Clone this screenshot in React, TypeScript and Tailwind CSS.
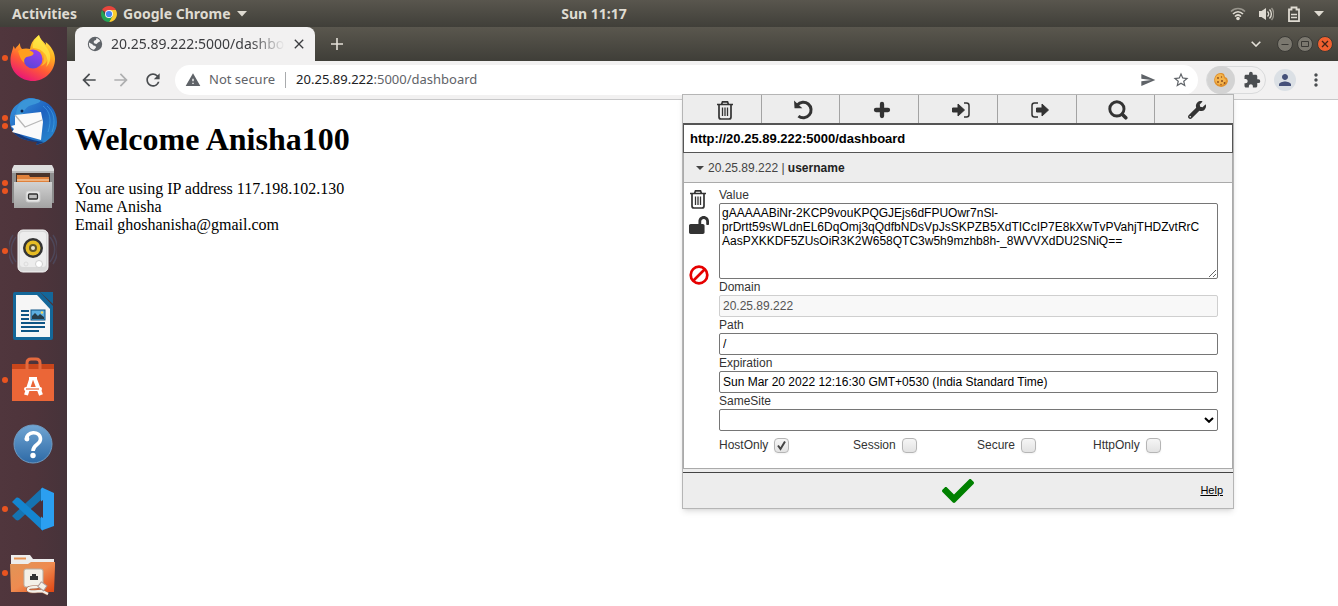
import type { ReactNode } from 'react';
import {
  MdArrowBack,
  MdArrowForward,
  MdClose,
  MdExtension,
  MdMoreVert,
  MdPerson,
  MdRefresh,
  MdSend,
  MdStarBorder,
  MdWarning,
} from 'react-icons/md';
import { FaCheck, FaLockOpen, FaWrench } from 'react-icons/fa';

const cookieValue = [
  'gAAAAABiNr-2KCP9vouKPQGJEjs6dFPUOwr7nSl-',
  'prDrtt59sWLdnEL6DqOmj3qQdfbNDsVpJsSKPZB5XdTICcIP7E8kXwTvPVahjTHDZvtRrC',
  'AasPXKKDF5ZUsOiR3K2W658QTC3w5h9mzhb8h-_8WVVXdDU2SNiQ==',
].join('\n');

/* ---------- Dock icons ---------- */

const Firefox = () => (
  <svg viewBox="0 0 48 48" className="size-12">
    <defs>
      <linearGradient id="fx" x1="0.8" y1="0" x2="0.3" y2="1">
        <stop offset="0" stopColor="#fff04a" />
        <stop offset="0.35" stopColor="#ffae20" />
        <stop offset="0.65" stopColor="#ff5a36" />
        <stop offset="1" stopColor="#e8127c" />
      </linearGradient>
      <linearGradient id="fxp" x1="0.7" y1="0" x2="0.3" y2="1">
        <stop offset="0" stopColor="#9a3ff0" />
        <stop offset="1" stopColor="#5b45d8" />
      </linearGradient>
    </defs>
    <path fill="url(#fx)" d="M30 1c1 4 5 7 7 10 0-1 0-2-.5-3C42 12 46 18 46 25c0 12-10 22-22 22S1.500 38 1.500 26c0-6 2-9 3-14 0 0 1 1 1.500 3C8 12 10 11 11 9c0 2 0 4 2 6 2-.7 6-.7 8 0 1-7 4-10 9-14z" />
    <circle cx="24" cy="25" r="9.500" fill="url(#fxp)" />
    <path fill="#ff9f1e" d="M9 17c5-3 10-2 13 0 2 1 3 2 2.500 3-1 2-4 2-7 3-2 1-3 3-2 6-4-3-5-8-6.500-12z" />
    <path fill="#ffb62b" d="M24 14c4-1 9 1 10 6 2 4 1 9-2 12 6-2 9-9 6-15-3-5-9-6-14-3z" />
    <path fill="#fff04a" d="M30 1c-5 4-7 9-6 13 5 0 9 2 12 6 3 4 3 9 1 13 5-4 6-12 1-19C35 10 31 6 30 1z" opacity=".65" />
  </svg>
);

const Thunderbird = () => (
  <svg viewBox="0 0 48 48" className="size-12">
    <defs>
      <linearGradient id="tb" x1="0" y1="0" x2="1" y2="1">
        <stop offset="0" stopColor="#3b9be0" />
        <stop offset="0.5" stopColor="#1e62c0" />
        <stop offset="1" stopColor="#2a8fd0" />
      </linearGradient>
    </defs>
    <path fill="url(#tb)" d="M20 0c3-.5 6 .5 8 1.500C40 3 48 12 48 24c0 10-7 18-14 21l-7 2 2-4C18 44 6 40 2 30-1 20 2 10 9 6c3-3 6-5 11-6z" />
    <path fill="#153a7c" d="M2 30c6 6 19 13 33 14l-8 3 1-3C15 43 5 38 2 30z" />
    <path fill="#3a95d8" d="M10 7c4-5 9-7 17-6 8 1 4 4-4 6-5 1-8 5-9 9l-7 1c0-4 1-7 3-10z" />
    <path fill="#fafafa" d="M6 17l26-3 2 10-2 18L3 34l2-3-3-3 4-1z" />
    <path fill="none" stroke="#b7b7b7" strokeWidth="1.300" d="M6 17l10 12 17-7" />
    <circle cx="13" cy="13" r="1.500" fill="#0c2350" />
    <path fill="none" stroke="#4db0ee" strokeWidth="1" opacity=".5" d="M34 8c7 5 9 14 5 26M38 8c7 6 9 15 5 26" />
  </svg>
);

const Files = () => (
  <svg viewBox="0 0 48 48" className="size-12">
    <defs>
      <linearGradient id="fl" x1="0" y1="0" x2="0" y2="1">
        <stop offset="0" stopColor="#d2d2d2" />
        <stop offset="1" stopColor="#a3a3a3" />
      </linearGradient>
    </defs>
    <path fill="#8e8e8e" d="M3 6h42v34H3z" />
    <path fill="#b9b9b9" d="M3 6h42v4H3z" />
    <path fill="#dedede" d="M5 2h38l2 4v2H3V6z" />
    <path fill="#4a332a" d="M7 10h34v9H7z" />
    <path fill="#e0813b" d="M8 12h12l1 2h19v5H8z" />
    <path stroke="#fce5c8" d="M8 17h32" />
    <path fill="url(#fl)" d="M5 19h38v26H5z" />
    <rect x="17" y="28" width="14" height="11" rx="2" fill="#e7e7e7" stroke="#c9c9c9" />
    <rect x="19.500" y="31" width="9" height="5" rx="1" fill="#bcbcbc" stroke="#2f2f2f" strokeWidth="1.300" />
  </svg>
);

const Speaker = () => (
  <svg viewBox="0 0 48 48" className="size-12">
    <g fill="none" stroke="#546488" strokeWidth="1.500" opacity=".4">
      <path d="M7 10c-6 8-6 17 0 25M4 8c-6 9-6 20 0 29M41 10c6 8 6 17 0 25M44 8c6 9 6 20 0 29" />
    </g>
    <rect x="9" y="3" width="30" height="42" rx="5" fill="#d9d9d9" stroke="#f5f5f5" />
    <rect x="11" y="5" width="26" height="35" rx="3" fill="#ededed" />
    <circle cx="24" cy="21" r="10" fill="#343434" />
    <circle cx="24" cy="21" r="7.500" fill="#e6bc25" />
    <circle cx="24" cy="21" r="4" fill="#62572a" />
    <circle cx="24" cy="21" r="2" fill="#e9e4cf" />
    <circle cx="30" cy="37" r="3.500" fill="#fff" stroke="#cfcfcf" />
    <circle cx="17" cy="37" r="2" fill="none" stroke="#dcdcdc" />
  </svg>
);

const Writer = () => (
  <svg viewBox="0 0 48 48" className="size-12">
    <path fill="#146799" d="M6 0h25l13 14v32a2 2 0 0 1-2 2H6a2 2 0 0 1-2-2V2a2 2 0 0 1 2-2z" />
    <path fill="#f6f6f6" d="M7 3h21l13 14v28H7z" />
    <path fill="#146799" d="M31 0h13v12z" />
    <path stroke="#0e5585" strokeWidth="2" d="M12 19h8M12 23h8M12 27h8M12 31h24M12 35h24M12 39h18" />
    <rect x="22" y="18" width="14" height="10" fill="#5daee0" stroke="#0e5585" />
    <path fill="#273d49" d="M23 27v-3l3-3 3 3 2-2 4 3v2z" />
    <circle cx="33" cy="20.500" r="1.200" fill="#f5d75c" />
  </svg>
);

const Software = () => (
  <svg viewBox="0 0 48 48" className="size-12">
    <path fill="#c9461b" d="M3 8h42v6H3z" />
    <path fill="#eb6637" d="M3 13h42v32H3z" />
    <path fill="none" stroke="#e56a3e" strokeWidth="3" d="M18 14V7c0-3 2-4 4-4h5c2 0 4 1 4 4v7" />
    <g stroke="#fff" fill="none">
      <path strokeWidth="4" d="M22.500 22l-5.500 17M25.500 22l6.500 17" />
      <path strokeWidth="3" d="M20 22.500h8" />
      <path strokeWidth="4" strokeLinecap="round" d="M17 33h14" />
      <path stroke="#eb6637" strokeWidth="1.200" d="M17 33h13" />
    </g>
  </svg>
);

const HelpIcon = () => (
  <svg viewBox="0 0 48 48" className="size-12">
    <defs>
      <linearGradient id="hp" x1="0" y1="0" x2="0" y2="1">
        <stop offset="0" stopColor="#70a5d3" />
        <stop offset="1" stopColor="#2e6aa6" />
      </linearGradient>
    </defs>
    <circle cx="24" cy="24" r="19" fill="url(#hp)" stroke="#6f9cc4" />
    <path fill="none" stroke="#fff" strokeWidth="3.600" d="M17.500 20c-1-9 14-10 14-1 0 6-7.500 5-7.500 12" />
    <circle cx="18" cy="19" r="2.400" fill="#fff" />
    <circle cx="24" cy="35.500" r="2.700" fill="#fff" />
  </svg>
);

const Code = () => (
  <svg viewBox="0 0 48 48" className="size-12">
    <path fill="#1673b1" d="M3 31l4 4c1 .7 2 .6 3 0L34 13V2z" />
    <path fill="#1485cf" d="M3 17l4-4c1-.7 2-.6 3 0l24 22v11z" />
    <path fill="#2b9ff0" d="M34 3l11 5v33l-11 4c-1 0-2-.5-2-1V4c0-.5 1-1 2-1z" />
    <path fill="#49303a" d="M34 15v18L22 24z" />
  </svg>
);

const FolderNetwork = () => (
  <svg viewBox="0 0 48 48" className="size-12">
    <defs>
      <linearGradient id="fd" x1="0" y1="0" x2="1" y2="1">
        <stop offset="0" stopColor="#df9558" />
        <stop offset="0.5" stopColor="#ef8b50" />
        <stop offset="1" stopColor="#e04411" />
      </linearGradient>
    </defs>
    <path fill="#ededed" d="M2 6h19l3 4h21v10H2z" />
    <path stroke="#e69252" strokeWidth="2" d="M5 9.500h12" />
    <path fill="url(#fd)" d="M1 15h18l3-2h24v4l-1 26H2z" />
    <rect x="15" y="20" width="19" height="18" rx="2" fill="#f4f0e8" stroke="#b5afa6" />
    <path fill="#343434" d="M21 31v-4h2v-2h4v2h2v4z" />
    <path fill="none" stroke="#9f6248" strokeWidth="3.500" d="M34 35c-5 6-14 1-15 5s9 2 14 2l6 3" />
    <path fill="none" stroke="#f4f0e8" strokeWidth="2.300" d="M34 35c-5 6-14 1-15 5s9 2 14 2l6 3" />
    <rect x="30" y="34" width="7" height="6" fill="#f4f0e8" stroke="#a99" transform="rotate(35 33 37)" />
  </svg>
);

const dock: { name: string; dots: number; icon: ReactNode }[] = [
  { name: 'Firefox', dots: 1, icon: <Firefox /> },
  { name: 'Thunderbird', dots: 2, icon: <Thunderbird /> },
  { name: 'Files', dots: 2, icon: <Files /> },
  { name: 'Rhythmbox', dots: 1, icon: <Speaker /> },
  { name: 'LibreOffice Writer', dots: 0, icon: <Writer /> },
  { name: 'Software', dots: 1, icon: <Software /> },
  { name: 'Help', dots: 0, icon: <HelpIcon /> },
  { name: 'Code', dots: 1, icon: <Code /> },
  { name: 'Network', dots: 1, icon: <FolderNetwork /> },
];

/* ---------- Small icons ---------- */

const ChromeLogo = () => (
  <svg viewBox="0 0 16 16" className="size-4">
    <path fill="#e8453c" d="M8 8L1.100 4A8 8 0 0 1 14.900 4z" />
    <path fill="#f9cc2f" d="M8 8V4h6.900A8 8 0 0 1 8 16l3.500-6z" />
    <path fill="#23a455" d="M8 8l3.500 2L8 16A8 8 0 0 1 1.100 4l3.400 6z" />
    <circle cx="8" cy="8" r="4" fill="#f4f4f4" />
    <circle cx="8" cy="8" r="3.100" fill="#4285f4" />
  </svg>
);

const Caret = () => (
  <svg viewBox="0 0 10 6" className="h-1.5 w-2.5">
    <path fill="currentColor" d="M0 0h10L5 5.500z" />
  </svg>
);

const Globe = () => (
  <svg viewBox="0 0 16 16" className="size-4 shrink-0">
    <circle cx="8" cy="8" r="7.200" fill="#5f6368" />
    <path fill="#f2f1f1" d="M9.500 2c1.500.5 3 1.500 3.800 3.300L11 6.500 9.500 8l-2-.5L6.500 6l1-1.500 1.500-.5zM2 6.500L5 8l1.500 1.500 2 .5.500 1.500L7 13.700C4 13.500 1.500 11 2 6.500z" />
  </svg>
);

const Cookie = () => (
  <svg viewBox="0 0 16 16" className="size-4">
    <path fill="#e0912c" d="M9 1a7 7 0 1 0 6 8l-1-3-2-1-1-3z" />
    <path fill="#f4b44c" d="M8 2a5.500 5.500 0 1 0 5 6l-2-2-1-3z" />
    <g fill="#8a4b1c">
      <circle cx="5" cy="6" r=".9" />
      <circle cx="8.500" cy="5" r=".7" />
      <circle cx="5" cy="10" r=".9" />
      <circle cx="9" cy="9" r="1" />
      <circle cx="11.500" cy="11" r=".9" />
      <circle cx="8" cy="12.500" r=".7" />
    </g>
  </svg>
);

const Trash = () => (
  <svg viewBox="0 0 18 20" className="h-5 w-4.5" fill="none" stroke="currentColor">
    <path strokeWidth="1.700" d="M1 4.500h16M5.500 4.500l1-2.700h5l1 2.700M3 4.500v12.500q0 2 2 2h8q2 0 2-2V4.500" />
    <path strokeWidth="1.300" d="M6.500 7.500v8.500M9 7.500v8.500M11.500 7.500v8.500" />
  </svg>
);

const Undo = () => (
  <svg viewBox="1 1 18 18" className="size-5">
    <path fill="none" stroke="currentColor" strokeWidth="2.700" d="M4 5.500A7 7 0 1 1 5 15.500" />
    <path fill="currentColor" d="M1 1.500l.5 7h7z" />
  </svg>
);

const Plus = () => (
  <svg viewBox="0 0 20 20" className="size-5">
    <path stroke="currentColor" strokeWidth="4.300" strokeLinecap="round" d="M10 4v12M4 10h12" />
  </svg>
);

const ImportIcon = () => (
  <svg viewBox="0 0 20 20" className="size-5">
    <path fill="currentColor" stroke="currentColor" strokeLinejoin="round" d="M1.500 8H7V4l6.500 6L7 16v-4H1.500z" />
    <path fill="none" stroke="currentColor" strokeWidth="1.500" d="M13 3h2.500q2.500 0 2.500 2.500v9q0 2.500-2.500 2.500H13" />
  </svg>
);

const ExportIcon = () => (
  <svg viewBox="0 0 20 20" className="size-5">
    <path fill="currentColor" stroke="currentColor" strokeLinejoin="round" d="M6.500 8H12V4l6.500 6-6.500 6v-4H6.500z" />
    <path fill="none" stroke="currentColor" strokeWidth="1.500" d="M8 3H4.500Q2 3 2 5.500v9Q2 17 4.500 17H8" />
  </svg>
);

const SearchIcon = () => (
  <svg viewBox="1 1 18 18" className="size-5" fill="none" stroke="currentColor">
    <circle cx="9" cy="9" r="6.400" strokeWidth="2.600" />
    <path strokeWidth="3.200" strokeLinecap="round" d="M14 14l3 3" />
  </svg>
);

const Ban = () => (
  <svg viewBox="0 0 20 20" className="size-5" fill="none" stroke="currentColor" strokeWidth="2.700">
    <circle cx="10" cy="10" r="8.300" />
    <path d="M4 16L16 4" />
  </svg>
);

const Wifi = () => (
  <svg viewBox="0 0 16 16" className="size-4" fill="none" stroke="currentColor">
    <path strokeWidth="1.700" opacity=".5" d="M1 5.500c4-4 10-4 14 0" />
    <path strokeWidth="1.700" d="M3 8c3-3 7-3 10 0M5 10.500c2-2 4-2 6 0" />
    <circle cx="8" cy="12.500" r="1.800" fill="currentColor" stroke="none" />
  </svg>
);

const Volume = () => (
  <svg viewBox="0 0 16 16" className="size-4" fill="none" stroke="currentColor" strokeWidth="1.400">
    <path fill="currentColor" stroke="none" d="M1 5h2.500L8 2v12l-4.500-3H1z" />
    <path d="M9.500 5.500c1.500 1.500 1.500 3.500 0 5M11.500 3.500c2.500 2.500 2.500 6.500 0 9" />
    <path opacity=".5" d="M13.500 2c3 3.500 3 8.500 0 12" />
  </svg>
);

const Battery = () => (
  <svg viewBox="0 0 16 16" className="size-4" fill="none" stroke="currentColor" strokeWidth="1.800">
    <path d="M3 3.500h2.500v-2h5v2H13v11.600H3z" />
    <path strokeWidth="1.500" d="M5 8.500h6M5 11.500h6" />
  </svg>
);

/* ---------- Window parts ---------- */

function TopBar() {
  return (
    <header className="grid h-[27px] shrink-0 grid-cols-[1fr_auto_1fr] items-center bg-linear-to-b from-[#59564e] to-[#403f39] pr-3.5 pl-3 font-['Noto_Sans',sans-serif] text-sm font-bold text-[#dfdbd2]">
      <div className="flex items-center gap-6">
        <button>Activities</button>
        <button className="flex items-center gap-1.5">
          <ChromeLogo />
          Google Chrome
          <Caret />
        </button>
      </div>
      <time className="mr-[148px]">Sun 11:17</time>
      <div className="flex items-center justify-end gap-3">
        <Wifi />
        <Volume />
        <Battery />
        <Caret />
      </div>
    </header>
  );
}

function Dock() {
  return (
    <nav className="flex w-[67px] shrink-0 flex-col justify-between bg-linear-to-r from-[#50363d] via-[#4e343b] to-[#46333a]">
      {dock.map((app) => (
        <button key={app.name} aria-label={app.name} className="flex h-16 items-center gap-1 pb-0.5 pl-0.5">
          <span className="flex w-1.5 flex-col gap-0.5">
            {Array.from({ length: app.dots }, (_, i) => (
              <span key={i} className="h-1.5 w-1.5 rounded-full bg-[#e95420]" />
            ))}
          </span>
          <span className="flex w-[42px] justify-center">
            <span className="shrink-0">{app.icon}</span>
          </span>
        </button>
      ))}
    </nav>
  );
}

function TabStrip() {
  return (
    <div className="flex h-[34px] items-end bg-linear-to-b from-[#5a574e] to-[#3f3e38] pr-[5px] pl-2 font-['Noto_Sans',sans-serif]">
      <div className="flex h-[34px] w-60 items-center rounded-t-lg bg-[#f2f1f1] pr-2 pl-3 text-[#3c3d40]">
        <Globe />
        <span className="ml-2 flex-1 overflow-hidden mask-r-from-80% text-sm whitespace-nowrap">20.25.89.222:5000/dashboard</span>
        <button aria-label="Close tab" className="ml-1.5">
          <MdClose className="size-4" />
        </button>
      </div>
      <button aria-label="New tab" className="ml-4 self-center text-[#e4e0d8]">
        <svg viewBox="0 0 12 12" className="size-3">
          <path stroke="currentColor" strokeWidth="1.600" d="M6 0v12M0 6h12" />
        </svg>
      </button>
      <div className="ml-auto flex items-center gap-1 self-center">
        <button aria-label="Search tabs" className="mr-3 text-[#e4e0d8]">
          <svg viewBox="0 0 10 6" className="h-1.5 w-2.5">
            <path fill="none" stroke="currentColor" strokeWidth="1.600" d="M.7.700L5 5 9.300.700" />
          </svg>
        </button>
        <button aria-label="Minimise" className="size-4 rounded-full border border-[#3a3935] bg-[#7b786f] text-[#3a3935]">
          <svg viewBox="0 0 14 14"><path stroke="currentColor" d="M3.500 7.500h7" /></svg>
        </button>
        <button aria-label="Maximise" className="size-4 rounded-full border border-[#3a3935] bg-[#7b786f] text-[#3a3935]">
          <svg viewBox="0 0 14 14"><path fill="none" stroke="currentColor" d="M3.500 4.500h7v5h-7z" /></svg>
        </button>
        <button aria-label="Close" className="size-4 rounded-full border border-[#3a3935] bg-[#f0602f] text-[#3f2317]">
          <svg viewBox="0 0 14 14"><path stroke="currentColor" strokeWidth="1.300" d="M4 4l6 6M10 4l-6 6" /></svg>
        </button>
      </div>
    </div>
  );
}

function AddressBar() {
  return (
    <div className="flex h-[39px] items-center border-b border-[#c8c8c9] bg-[#f2f1f1] pr-3 pl-3 font-['Noto_Sans',sans-serif] text-[13px] text-[#5f6368]">
      <div className="flex gap-3 text-[#4a4d50]">
        <button aria-label="Back"><MdArrowBack className="size-5" /></button>
        <button aria-label="Forward" className="text-[#aeafb0]"><MdArrowForward className="size-5" /></button>
        <button aria-label="Reload"><MdRefresh className="size-5" /></button>
      </div>
      <div className="ml-3 flex h-[30px] flex-1 items-center rounded-full bg-white pr-2 pl-2.5">
        <MdWarning className="size-4" />
        <span className="ml-2">Not secure</span>
        <span className="mx-2.5 h-4 w-px bg-[#a9abad]" />
        <span className="flex-1"><span className="text-[#202124]">20.25.89.222</span>:5000/dashboard</span>
        <button aria-label="Share"><MdSend className="size-4" /></button>
        <button aria-label="Bookmark" className="ml-4"><MdStarBorder className="size-4.5" /></button>
      </div>
      <div className="ml-2 flex h-7 w-[60px] items-center rounded-full border border-[#d9dadb]">
        <button aria-label="Cookie editor" className="flex size-7 items-center justify-center rounded-full bg-[#d3d3d3]"><Cookie /></button>
        <button aria-label="Extensions" className="ml-2 text-[#4a4d50]"><MdExtension className="size-4.5" /></button>
      </div>
      <button aria-label="Profile" className="ml-2 flex size-[22px] items-center justify-center rounded-full bg-[#dbe0e5] text-[#45517a]">
        <MdPerson className="size-[18px]" />
      </button>
      <button aria-label="Menu" className="ml-2.5 text-[#4a4d50]"><MdMoreVert className="size-5" /></button>
    </div>
  );
}

const tools: { label: string; icon: ReactNode }[] = [
  { label: 'Delete all', icon: <Trash /> },
  { label: 'Reset', icon: <Undo /> },
  { label: 'Add', icon: <Plus /> },
  { label: 'Import', icon: <ImportIcon /> },
  { label: 'Export', icon: <ExportIcon /> },
  { label: 'Search', icon: <SearchIcon /> },
  { label: 'Options', icon: <FaWrench className="size-4.5" /> },
];

const flags = [
  { id: 'HostOnly', checked: true, column: 'w-[134px]' },
  { id: 'Session', checked: false, column: 'w-[124px]' },
  { id: 'Secure', checked: false, column: 'w-[116px]' },
  { id: 'HttpOnly', checked: false, column: '' },
];

const field = 'block h-[22px] w-full rounded-xs border border-[#767676] bg-white px-[3px] text-black';

function CookiePopup() {
  return (
    <section className="absolute -top-1.5 right-[104px] w-[552px] border border-[#b5b5b5] bg-[#ededed] font-['Liberation_Sans',Arial,sans-serif] text-xs text-[#333] shadow-md">
      <div className="flex h-7 divide-x divide-[#a3a3a3]">
        {tools.map((t) => (
          <button key={t.label} aria-label={t.label} className="flex flex-1 items-center justify-center pt-0.5 pl-1.5">
            {t.icon}
          </button>
        ))}
      </div>
      <input
        aria-label="Address"
        defaultValue="http://20.25.89.222:5000/dashboard"
        className="block h-[30px] w-full border border-t-2 border-[#555] bg-white px-1.5 text-[13px] font-bold text-black"
      />
      <div className="border-x border-b border-[#aaa]">
        <button className="flex h-[30px] w-full items-center border-b border-[#aaa] pl-3 text-[#444]">
          <svg viewBox="0 0 8 4" className="mr-1 h-1 w-2"><path fill="currentColor" d="M0 0h8L4 4z" /></svg>
          <span>20.25.89.222 | <b className="text-[#222]">username</b></span>
        </button>
        <div className="flex bg-white pt-1 pr-3.5 pb-3.5 pl-[5px]">
          <div className="flex w-[30px] shrink-0 flex-col gap-1.5 pt-0.5">
            <button aria-label="Delete cookie"><Trash /></button>
            <button aria-label="Protect cookie"><FaLockOpen className="size-5" /></button>
            <button aria-label="Block cookie" className="mt-6 text-[#e60000]"><Ban /></button>
          </div>
          <div className="flex-1 leading-4">
            <label htmlFor="value" className="block">Value</label>
            <textarea
              id="value"
              defaultValue={cookieValue}
              className="block h-[76px] w-full resize overflow-hidden rounded-xs border border-[#767676] bg-white p-0.5 leading-[14px] text-black"
            />
            <label htmlFor="domain" className="block">Domain</label>
            <input id="domain" disabled defaultValue="20.25.89.222" className="block h-[22px] w-full rounded-xs border border-[#cfcfcf] bg-[#f8f8f8] px-[3px] text-[#545454]" />
            <label htmlFor="path" className="block">Path</label>
            <input id="path" defaultValue="/" className={field} />
            <label htmlFor="expiration" className="block">Expiration</label>
            <input id="expiration" defaultValue="Sun Mar 20 2022 12:16:30 GMT+0530 (India Standard Time)" className={field} />
            <label htmlFor="samesite" className="block">SameSite</label>
            <div className="relative">
              <select id="samesite" className={`${field} appearance-none`}>
                <option></option>
              </select>
              <svg viewBox="0 0 10 6" className="pointer-events-none absolute top-2 right-1 h-1.5 w-2.5">
                <path fill="none" stroke="#000" strokeWidth="2" d="M1 1l4 3.800L9 1" />
              </svg>
            </div>
            <div className="mt-[5px] flex h-4.5 items-center">
              {flags.map((f) => (
                <div key={f.id} className={`flex items-center gap-1.5 ${f.column}`}>
                  <label htmlFor={f.id}>{f.id}</label>
                  <span className="relative flex">
                    <input
                      id={f.id}
                      type="checkbox"
                      defaultChecked={f.checked}
                      className="peer size-[15px] appearance-none rounded-sm border border-[#b5b5b5] bg-linear-to-b from-[#f6f6f6] to-[#e2e2e2] shadow-xs"
                    />
                    <svg viewBox="0 0 15 15" className="pointer-events-none absolute inset-0 hidden size-[15px] peer-checked:block">
                      <path fill="none" stroke="#444" strokeWidth="2" d="M4 7.500l2.500 3.500L11 3.500" />
                    </svg>
                  </span>
                </div>
              ))}
            </div>
          </div>
        </div>
      </div>
      <footer className="mt-[3px] grid h-9 grid-cols-[1fr_auto_1fr] items-center border-t border-[#444] px-2.5">
        <span />
        <button aria-label="Save" className="text-[#008000]"><FaCheck className="size-8" /></button>
        <a href="#help" className="justify-self-end text-[11px] text-black underline">Help</a>
      </footer>
    </section>
  );
}

export default function App() {
  return (
    <div className="flex min-h-screen flex-col bg-white">
      <TopBar />
      <div className="flex flex-1">
        <Dock />
        <div className="flex min-w-0 flex-1 flex-col">
          <TabStrip />
          <AddressBar />
          <div className="relative flex-1 px-2 font-['Liberation_Serif',serif] leading-[18px] text-black">
            <main>
              <h1 className="mt-5 mb-[22px] text-[32px] leading-[38px] font-bold">Welcome Anisha100</h1>
              <p>You are using IP address 117.198.102.130</p>
              <p>Name Anisha</p>
              <p>Email ghoshanisha@gmail.com</p>
            </main>
            <CookiePopup />
          </div>
        </div>
      </div>
    </div>
  );
}
